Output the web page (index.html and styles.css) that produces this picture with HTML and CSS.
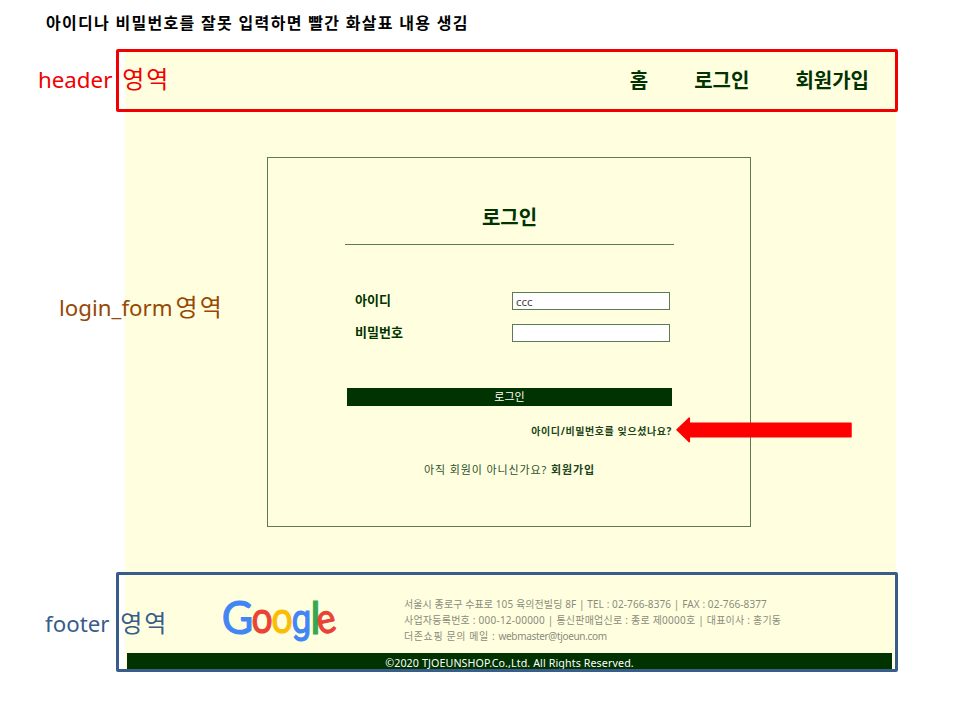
FILE: index.html
```html
<!DOCTYPE html>
<html lang="ko">
<head>
<meta charset="utf-8">
<title>로그인</title>
<link rel="stylesheet" href="styles.css">
</head>
<body>
<div class="slide">
  <h1 class="slide-title">아이디나 비밀번호를 잘못 입력하면 빨간 화살표 내용 생김</h1>
  <div class="page">
    <nav class="nav"><a>홈</a><a>로그인</a><a>회원가입</a></nav>
    <main class="main">
      <form class="login">
        <h2 class="login-title">로그인</h2>
        <div class="fields">
          <label class="field"><span>아이디</span><input type="text" value="ccc"></label>
          <label class="field"><span>비밀번호</span><input type="password"></label>
        </div>
        <button class="submit" type="button">로그인</button>
        <a class="forgot">아이디/비밀번호를 잊으셨나요?</a>
        <p class="join">아직 회원이 아니신가요? <b>회원가입</b></p>
      </form>
    </main>
    <footer class="footer">
      <div class="footer-info">
        <svg class="logo" width="120" height="54" viewBox="0 0 120 54" role="img" aria-label="Google">
          <g class="logo-text">
            <text transform="translate(.8 37.5) scale(.92 1)" font-size="47" fill="#4285f4" stroke="#4285f4">G</text>
            <text transform="translate(30.4 37.3) scale(.85 1)" font-size="44" fill="#ea4335" stroke="#ea4335">o</text>
            <text transform="translate(50.4 37.3) scale(.85 1)" font-size="44" fill="#fbbc05" stroke="#fbbc05">o</text>
            <text class="logo-g" transform="translate(70.4 37.3) scale(.86 1)" font-size="41" fill="#4285f4" stroke="#4285f4">g</text>
            <text transform="translate(89.2 37.5)" font-size="44" fill="#34a853" stroke="#34a853">l</text>
            <text transform="translate(98.2 38.8) rotate(-12) scale(.86 1)" font-size="42" fill="#ea4335" stroke="#ea4335">e</text>
          </g>
        </svg>
        <address class="address">
          <div class="line1">서울시 종로구 수표로 105 육의전빌딩 8F | TEL : 02-766-8376 | FAX : 02-766-8377</div>
          <div class="line2">사업자등록번호 : 000-12-00000 | 통신판매업신로 : 종로 제0000호 | 대표이사 : 홍기동</div>
          <div class="line3"><span>더존쇼핑 문의 메일 : </span>webmaster@tjoeun.com</div>
        </address>
      </div>
      <p class="copyright">©2020 TJOEUNSHOP.Co.,Ltd. All Rights Reserved.</p>
    </footer>
  </div>
  <div class="frame frame-header"></div>
  <div class="frame frame-footer"></div>
  <div class="note note-header">header <span>영역</span></div>
  <div class="note note-login">login_form<span>영역</span></div>
  <div class="note note-footer">footer <span>영역</span></div>
  <svg class="arrow" width="176" height="26" viewBox="0 0 176 26"><path d="M1 12.7 13.3 1V6.3H175V19.7H13.3V24.8Z" fill="#f00" stroke="#f00" stroke-width="1.5" stroke-linejoin="round"/></svg>
</div>
</body>
</html>
```
FILE: styles.css
```css
* { box-sizing: border-box; }
body, h1, h2, p { margin: 0; }
body {
  background: #fff;
  font-family: "Noto Sans", "Noto Sans CJK KR", sans-serif;
  color: #030;
}
.slide { position: relative; width: 960px; height: 720px; overflow: hidden; }
.slide-title {
  height: 51px;
  padding: 11px 0 0 46px;
  font-size: 16px;
  line-height: 24px;
  letter-spacing: 1.3px;
  color: #000;
  white-space: nowrap;
}
.page {
  display: flex;
  flex-direction: column;
  width: 771px;
  height: 620px;
  margin-left: 125px;
  background: #ffffe0;
}
.nav {
  display: flex;
  justify-content: flex-end;
  gap: 46px;
  height: 60px;
  padding-right: 27px;
  font-size: 20px;
  line-height: 59px;
  font-weight: 700;
}
.main { height: 464px; padding: 46px 0 0 142px; }
.login {
  display: flex;
  flex-direction: column;
  width: 484px;
  height: 370px;
  padding: 0 76px 0 77px;
  border: 1px solid #5c7a55;
}
.login-title {
  height: 87px;
  padding-top: 45px;
  border-bottom: 1px solid #5c7a55;
  text-align: center;
  font-size: 20px;
  line-height: 30px;
}
.fields { display: flex; flex-direction: column; gap: 14px; padding: 47px 4px 0 10px; }
.field {
  display: flex;
  justify-content: space-between;
  height: 18px;
  font-size: 13px;
  line-height: 17px;
  font-weight: 700;
}
.field input {
  width: 158px;
  height: 18px;
  padding: 0 3px;
  border: 1px solid #5c7a55;
  border-radius: 0;
  background: #fff;
  color: #444;
  font: 11.5px "Noto Sans", sans-serif;
}
.submit {
  height: 18px;
  margin: 46px 2px 0;
  padding: 0;
  border: 0;
  background: #030;
  color: #fff;
  font: 11px/18px "Noto Sans", "Noto Sans CJK KR", sans-serif;
}
.forgot {
  margin: 17px 2px 0 0;
  text-align: right;
  font-size: 10px;
  line-height: 16px;
  font-weight: 700;
  letter-spacing: .6px;
  color: #1c441a;
}
.join {
  margin-top: 22px;
  text-align: center;
  font-size: 11px;
  line-height: 18px;
  letter-spacing: .88px;
  color: #2c522a;
}
.join b { color: #1c441a; }
.footer { height: 96px; padding: 0 4px 0 2px; }
.footer-info { display: flex; height: 78px; padding: 21px 0 0 94px; }
.logo { flex: none; margin-right: 63px; }
.logo-text { font-family: Lato, sans-serif; stroke-width: 1.1; }
.logo-g { font-family: Roboto, sans-serif; }
.address {
  font-style: normal;
  font-size: 10px;
  line-height: 16px;
  color: #8b8b7c;
  white-space: nowrap;
}
.line1 { letter-spacing: .1px; }
.line2 { letter-spacing: .23px; }
.line3 { letter-spacing: -.33px; }
.line3 span { letter-spacing: .6px; }
.copyright {
  height: 18px;
  overflow: hidden;
  background: #030;
  color: #fff;
  text-align: center;
  font-size: 10.7px;
  letter-spacing: .1px;
  line-height: 20px;
}
.frame { position: absolute; left: 116px; width: 782px; border: 3px solid; border-radius: 2px; }
.frame-header { top: 49px; height: 63px; border-color: #f00000; }
.frame-footer { top: 572px; height: 100px; border-color: #385d8a; }
.note { position: absolute; font-size: 22.3px; line-height: 36px; white-space: nowrap; }
.note span { margin-left: 4px; font-size: 24px; letter-spacing: 2px; }
.note-header { left: 38px; top: 61px; color: #f00000; }
.note-login { left: 59px; top: 289px; color: #974806; }
.note-login span { margin-left: 3px; }
.note-footer { left: 45px; top: 605px; color: #385d8a; }
.note-footer span { margin-left: 5px; }
.arrow { position: absolute; left: 676px; top: 417px; }
```
